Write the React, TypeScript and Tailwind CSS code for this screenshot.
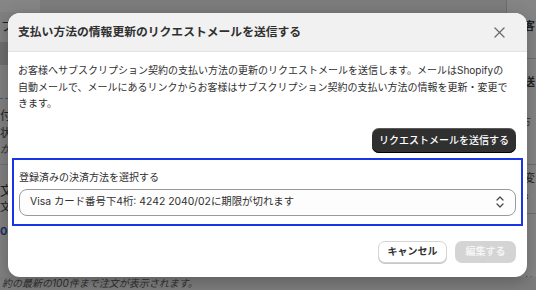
import React from "react";

const font = "font-['Inter','Noto_Sans_CJK_JP',sans-serif]";

function UpDownIcon() {
  return (
    <svg width="10" height="14" viewBox="0 0 10 14" fill="none" stroke="#4a4a4a" strokeWidth="1.3" strokeLinecap="round" strokeLinejoin="round">
      <path d="M2 5 L5 2 L8 5" />
      <path d="M2 9 L5 12 L8 9" />
    </svg>
  );
}

function CloseIcon() {
  return (
    <svg width="11" height="11" viewBox="0 0 11 11" fill="none" stroke="#6b6b6b" strokeWidth="1.3" strokeLinecap="round">
      <path d="M1 1 L10 10" />
      <path d="M10 1 L1 10" />
    </svg>
  );
}

export default function App() {
  return (
    <div className={`relative w-[536px] h-[290px] overflow-hidden bg-[#7c7c7c] ${font}`}>
      {/* dimmed page behind the modal */}
      <div className="flex h-full">
        <div className="w-[40px] flex flex-col bg-[#808080] text-[#1f1f1f] text-[12px]">
          <div className="h-[12px] bg-[#858585]" />
          <div className="h-[30px] flex items-center pl-[1px] leading-none">プ</div>
          <div className="h-[23px] bg-[#6e6e6e]" />
          <div className="h-[34px] border-b border-dashed border-[#3f5a7a]" />
          <div className="pt-[8px] leading-[18px]">付</div>
          <div className="leading-[16px] text-[11px]">状態</div>
          <div className="leading-[16px] text-[11px] italic text-[#333]">が</div>
          <div className="h-[8px] border-b border-[#707070]" />
          <div className="pt-[16px] leading-[18px] text-[13px]">文</div>
          <div className="leading-[16px] text-[11px]">文回</div>
          <div className="pt-[8px] leading-[16px] text-[11px] font-bold text-[#1d3160]">01</div>
        </div>
        <div className="flex-1" />
        <div className="w-[30px] flex flex-col bg-[#858585] border-l border-[#6d6d6d] pl-[6px] text-[#1f1f1f] text-[11px]">
          <div className="h-[22px]" />
          <div className="leading-[15px] font-semibold">顧客</div>
          <div className="leading-[15px] text-[#1d3160] font-semibold">ic</div>
          <div className="h-[12px] border-b border-[#6d6d6d]" />
          <div className="pt-[15px] leading-[16px] font-semibold">配送</div>
          <div className="leading-[14px]">ga</div>
          <div className="leading-[12px]">05</div>
          <div className="leading-[12px] text-[9px] text-[#333]">上方</div>
          <div className="leading-[14px]">st</div>
          <div className="leading-[14px]">ap</div>
          <div className="h-[10px] border-b border-[#6d6d6d]" />
          <div className="pt-[4px] leading-[18px]">防変</div>
          <div className="leading-[18px] italic font-bold text-[#1d3160]">ws</div>
          <div className="h-[10px] border-b border-[#6d6d6d]" />
          <div className="pt-[60px] leading-[16px]">支払</div>
        </div>
      </div>
      <div className="absolute left-[0px] top-[277px] w-[536px] h-[13px] bg-[#7c7c7c] pl-[2px] text-[10px] leading-[13px] italic text-[#2e2e2e]">
        約の最新の100件まで注文が表示されます。
      </div>

      {/* modal */}
      <div className="absolute left-[8px] top-[13px] w-[519px] h-[264px] rounded-[12px] bg-white overflow-hidden shadow-[0_4px_16px_rgba(0,0,0,0.25)] flex flex-col">
        <div className="h-[39px] shrink-0 bg-[#f1f1f1] border-b border-[#e3e3e3] flex items-center justify-between pl-[10px] pr-[22px]">
          <h1 className="text-[11.8px] font-bold text-[#303030] pt-[1px]">支払い方法の情報更新のリクエストメールを送信する</h1>
          <CloseIcon />
        </div>
        <div className="px-[10px] pt-[10px] text-[10px] leading-[16.6px] text-[#303030] whitespace-nowrap">
          <span className="block">お客様へサブスクリプション契約の支払い方法の更新のリクエストメールを送信します。メールはShopifyの</span>
          <span className="block">自動メールで、メールにあるリンクからお客様はサブスクリプション契約の支払い方法の情報を更新・変更で</span>
          <span className="block">きます。</span>
        </div>
        <div className="flex justify-end pr-[11px] pt-[16px]">
          <button className="h-[25px] px-[7px] rounded-[7px] bg-[#303030] text-white text-[10px] font-medium shadow-[inset_0_-1px_0_#000,inset_0_1px_0_rgba(255,255,255,0.2)]">
            リクエストメールを送信する
          </button>
        </div>
        <div className="mx-[4px] mt-[5px] h-[68px] border-2 border-[#1a35e6] px-[5px] pt-[10px]">
          <div className="text-[10px] leading-[14px] text-[#303030]">登録済みの決済方法を選択する</div>
          <div className="mt-[5px] h-[27px] rounded-[8px] border border-[#9a9a9a] bg-[#fdfdfd] flex items-center justify-between pl-[10px] pr-[10px]">
            <span className="text-[10.4px] text-[#303030]">Visa カード番号下4桁: 4242 2040/02に期限が切れます</span>
            <UpDownIcon />
          </div>
        </div>
        <div className="flex justify-end gap-[8px] pr-[11px] pt-[15px]">
          <button className="h-[22px] w-[69px] rounded-[7px] bg-white border border-[#d4d4d4] shadow-[0_1px_0_#c8c8c8] text-[10px] font-bold text-[#303030]">
            キャンセル
          </button>
          <button className="h-[22px] w-[61px] rounded-[7px] bg-[#d4d4d4] text-[10px] font-bold text-[#f4f4f4]">
            編集する
          </button>
        </div>
      </div>
    </div>
  );
}
